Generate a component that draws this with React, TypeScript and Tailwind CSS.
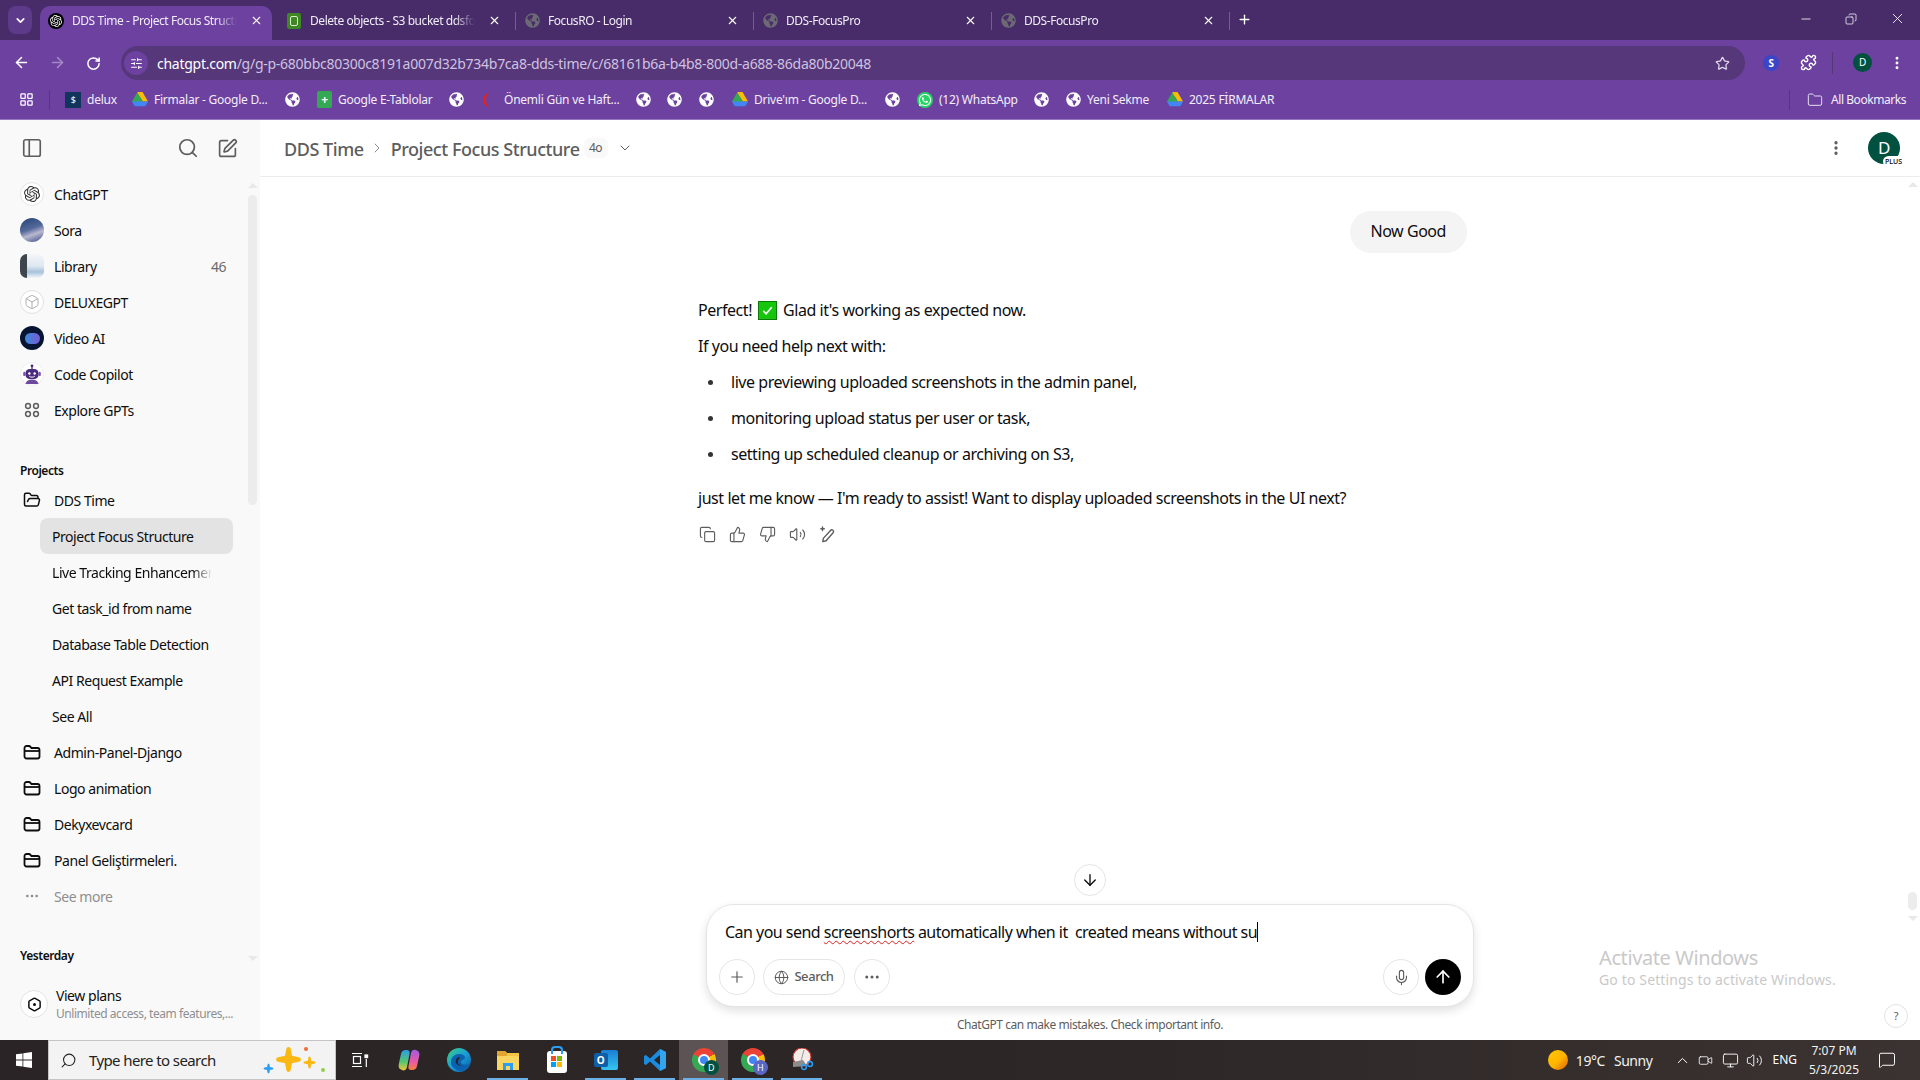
import React from "react";
import {
  ArrowLeft, ArrowRight, RotateCw, Star, Puzzle, EllipsisVertical, X, Plus, Minus, Search, SquarePen,
  PanelLeft, Folder, FolderOpen, ChevronRight, ChevronDown, Globe, Mic, ArrowUp, ArrowDown, Ellipsis,
  Copy, ThumbsUp, ThumbsDown, Volume2, Box, LayoutGrid, SlidersHorizontal, ChevronUp, Monitor, MessageSquare, Video, Hexagon, Sparkle,
} from "lucide-react";
import { FaGlobeAmericas, FaWhatsapp } from "react-icons/fa";
import { SiOpenai } from "react-icons/si";

function Drive() {
  return (
    <svg width="16" height="15" viewBox="0 0 24 22">
      <path d="M8 0h8l8 14h-8z" fill="#fbbc04" />
      <path d="M8 0l8 14-4 7-12-7z" fill="#34a853" />
      <path d="M0 14l4 7h16l4-7z" fill="#4285f4" />
      <path d="M8 0h8l-4 7z" fill="#fbbc04" />
    </svg>
  );
}

function FolderBand() {
  return (
    <svg width="18" height="18" viewBox="0 0 18 18" fill="none" stroke="#0d0d0d" strokeWidth="1.8" strokeLinejoin="round">
      <path d="M1.500 5a2 2 0 012-2h3l2 2h6a2 2 0 012 2v6.500a2 2 0 01-2 2h-11a2 2 0 01-2-2z" />
      <path d="M1.500 8h15" />
    </svg>
  );
}

function Tab({ title, active, icon, sep }: { title: string; active?: boolean; icon: React.ReactNode; sep?: boolean }) {
  return (
    <div className={`relative shrink-0 h-[34px] flex items-center pb-[5px] ${active ? "w-[232px] bg-[#6d41a0] rounded-t-[10px] pl-2 pr-[9px] mr-[6px]" : "w-[238px] pl-[8px] pr-[15px]"}`}>
      <span className="w-4 h-4 flex items-center justify-center shrink-0">{icon}</span>
      <span className="ml-2 flex-1 overflow-hidden whitespace-nowrap text-[12px] text-[#f1ecf7] [mask-image:linear-gradient(90deg,#000_85%,transparent_97%)]">{title}</span>
      <X size={13} strokeWidth={2} className="text-white ml-2 shrink-0" />
      {sep && <span className="absolute right-0 top-[6px] h-[18px] w-px bg-[#7a55a8]" />}
    </div>
  );
}

const globeTab = <FaGlobeAmericas size={15} className="text-[#6d6a75]" />;
const globeB = <FaGlobeAmericas size={15} className="text-white" />;

function BM({ w, icon, label }: { w: number; icon: React.ReactNode; label?: string }) {
  return (
    <div style={{ width: w }} className="shrink-0 flex items-center gap-[6px] overflow-hidden">
      <span className="shrink-0 flex items-center">{icon}</span>
      {label && <span className="text-[12px] tracking-[-0.02em] text-[#f3eef9] whitespace-nowrap">{label}</span>}
    </div>
  );
}

function Browser() {
  return (
    <div className="shrink-0">
      <div className="h-10 bg-[#472c69] flex items-end pl-2">
        <div className="w-6 h-7 mb-[6px] mr-2 rounded-[8px] bg-[#5e3a8a] flex items-center justify-center shrink-0">
          <ChevronDown size={13} strokeWidth={3} className="text-white" />
        </div>
        <Tab active title="DDS Time - Project Focus Structure" icon={<span className="w-4 h-4 rounded-full bg-black text-white flex items-center justify-center"><SiOpenai size={12} /></span>} />
        <Tab title="Delete objects - S3 bucket ddsfocus" sep icon={<span className="w-[14px] h-4 rounded-[2px] bg-[#3f8624] flex items-center justify-center"><span className="w-2 h-[10px] border border-[#d8f0c8] rounded-[2px]" /></span>} />
        <Tab title="FocusRO - Login" sep icon={globeTab} />
        <Tab title="DDS-FocusPro" sep icon={globeTab} />
        <Tab title="DDS-FocusPro" sep icon={globeTab} />
        <Plus size={15} strokeWidth={2.2} className="text-white ml-[7px] mb-[13px] shrink-0" />
        <div className="flex-1" />
        <div className="flex items-center mb-[13px] text-white">
          <Minus size={14} strokeWidth={1.4} className="mr-[32px]" />
          <Copy size={12} strokeWidth={1.5} className="mr-[32px] scale-x-[-1]" />
          <X size={17} strokeWidth={1.2} className="mr-[14px]" />
        </div>
      </div>
      <div className="h-10 bg-[#6d41a0] flex items-start pt-[6px] pl-[13px]">
        <ArrowLeft size={17} strokeWidth={2.2} className="text-white mt-2 mr-[19px]" />
        <ArrowRight size={17} strokeWidth={2.2} className="text-[#a48ac4] mt-2 mr-[20px]" />
        <RotateCw size={15} strokeWidth={2.4} className="text-white mt-[10px] mr-[20px]" />
        <div className="w-[1624px] h-[34px] rounded-full bg-[#56377a] flex items-center pl-[3px] shrink-0">
          <span className="w-[24px] h-[24px] rounded-full bg-[#6d41a0] flex items-center justify-center mr-[9px]">
            <SlidersHorizontal size={13} className="text-white" />
          </span>
          <span className="text-[14px] tracking-[-0.019em] text-white">chatgpt.com</span>
          <span className="text-[14px] tracking-[-0.019em] text-[#cfc2e0]">/g/g-p-680bbc80300c8191a007d32b734b7ca8-dds-time/c/68161b6a-b4b8-800d-a688-86da80b20048</span>
          <div className="flex-1" />
          <Star size={15} strokeWidth={2} className="text-[#e1d8ec] mr-[15px]" />
        </div>
        <span className="ml-[18px] mt-[9px] w-4 h-4 rounded-full bg-[#3b45c8] text-white text-[10px] font-bold flex items-center justify-center">S</span>
        <Puzzle size={17} strokeWidth={2} className="text-white ml-[21px] mt-2" />
        <span className="ml-[15px] mt-[6px] w-px h-[22px] bg-[#56377a]" />
        <span className="ml-[20px] mt-[7px] w-[19px] h-[19px] rounded-full bg-[#00513f] text-white text-[10px] flex items-center justify-center">D</span>
        <EllipsisVertical size={16} strokeWidth={2.4} className="text-white ml-[17px] mt-[9px]" />
      </div>
      <div className="h-10 bg-[#6d41a0] border-b border-[#9478bd] flex items-center pl-[19px]">
        <span className="w-[30px] shrink-0"><LayoutGrid size={15} className="text-white" /></span>
        <span className="w-px h-[20px] bg-[#56377a] mr-[15px] shrink-0" />
        <BM w={67} label="delux" icon={<span className="w-4 h-4 bg-[#12355b] flex items-center justify-center text-white text-[9px]">$</span>} />
        <BM w={153} label="Firmalar - Google D..." icon={<Drive />} />
        <BM w={32} icon={globeB} />
        <BM w={132} label="Google E-Tablolar" icon={<span className="w-[15px] h-[17px] rounded-[2px] bg-[#34a853] flex items-center justify-center text-white text-[12px] font-bold leading-none">+</span>} />
        <BM w={34} icon={globeB} />
        <BM w={153} label="Önemli Gün ve Haft..." icon={<span className="w-[14px] h-[14px] rounded-full border-l-[3px] border-[#e2231a] mr-[1px]" />} />
        <BM w={31} icon={globeB} />
        <BM w={32} icon={globeB} />
        <BM w={33} icon={globeB} />
        <BM w={153} label="Drive'ım - Google D..." icon={<Drive />} />
        <BM w={32} icon={globeB} />
        <BM w={117} label="(12) WhatsApp" icon={<span className="w-4 h-4 rounded-full bg-[#25d366] flex items-center justify-center"><FaWhatsapp size={14} className="text-white" /></span>} />
        <BM w={32} icon={globeB} />
        <BM w={101} label="Yeni Sekme" icon={globeB} />
        <BM w={120} label="2025 FİRMALAR" icon={<Drive />} />
        <div className="flex-1" />
        <span className="w-px h-[20px] bg-[#56377a] mr-[17px]" />
        <Folder size={16} strokeWidth={1.5} className="text-[#e5dcef] mr-[8px]" />
        <span className="text-[12px] text-[#f3eef9] mr-[14px]">All Bookmarks</span>
      </div>
    </div>
  );
}

function Row({ icon, label, muted, right }: { icon: React.ReactNode; label: string; muted?: boolean; right?: string }) {
  return (
    <div className="h-9 flex items-center pl-5 pr-[34px]">
      <span className="w-6 h-6 flex items-center justify-center shrink-0">{icon}</span>
      <span className={`ml-[10px] text-[14px] whitespace-nowrap ${muted ? "text-[#8f8f8f]" : "text-[#0d0d0d]"}`}>{label}</span>
      {right && <span className="ml-auto text-[14px] text-[#6b6b6b]">{right}</span>}
    </div>
  );
}

function SubRow({ label, active, fade }: { label: string; active?: boolean; fade?: boolean }) {
  return (
    <div className={`h-9 w-[193px] ml-10 flex items-center pl-3 rounded-lg overflow-hidden ${active ? "bg-[#e3e3e3]" : ""}`}>
      <span className={`text-[14px] text-[#0d0d0d] whitespace-nowrap overflow-hidden ${fade ? "w-[160px] [mask-image:linear-gradient(90deg,#000_88%,transparent)]" : ""}`}>{label}</span>
    </div>
  );
}

function Sidebar() {
  const folder = <FolderBand />;
  return (
    <aside className="relative w-[260px] shrink-0 bg-[#f9f9f9] flex flex-col">
      <div className="h-14 flex items-center pl-[21px]">
        <PanelLeft size={22} strokeWidth={1.8} className="text-[#5d5d5d]" />
        <Search size={22} strokeWidth={1.9} className="text-[#5d5d5d] ml-[134px]" />
        <SquarePen size={21} strokeWidth={1.9} className="text-[#5d5d5d] ml-[18px]" />
      </div>
      <Row label="ChatGPT" icon={<span className="w-6 h-6 rounded-full bg-white border border-[#e5e5e5] flex items-center justify-center text-[#333]"><SiOpenai size={16} /></span>} />
      <Row label="Sora" icon={<span className="w-6 h-6 rounded-full bg-[linear-gradient(160deg,#2e4a7d_10%,#54699a_45%,#b9b8d0_65%,#48578f_95%)]" />} />
      <Row label="Library" right="46" icon={
        <span className="w-6 h-6 rounded-[7px] overflow-hidden bg-[#f4f6f9] flex">
          <span className="w-[7px] bg-[#3d454d]" />
          <span className="flex-1 bg-[linear-gradient(180deg,#f4f6f9_0%,#dfe7f0_50%,#a8c1dc_75%,#f4f6f9_100%)]" />
        </span>} />
      <Row label="DELUXEGPT" icon={<span className="w-6 h-6 rounded-full bg-white border border-[#e0e0e0] flex items-center justify-center"><Box size={16} strokeWidth={1.4} className="text-[#a8a8a8]" /></span>} />
      <Row label="Video AI" icon={<span className="w-6 h-6 rounded-full bg-[#071533] flex items-center justify-center"><span className="w-[15px] h-[11px] rounded-[6px] bg-[linear-gradient(90deg,#3a8bd8,#7a5ad8)]" /></span>} />
      <Row label="Code Copilot" icon={
        <span className="w-6 h-6 rounded-full bg-white border border-[#eee] flex items-center justify-center">
          <svg width="22" height="22" viewBox="0 0 20 20">
            <circle cx="10" cy="2.600" r="1.300" fill="#4a2a7c" />
            <rect x="9.400" y="3" width="1.200" height="3" fill="#4a2a7c" />
            <rect x="4" y="5.500" width="12" height="9" rx="4" fill="#4a2a7c" />
            <rect x="2" y="8" width="2" height="4" rx="1" fill="#7a4fb0" />
            <rect x="16" y="8" width="2" height="4" rx="1" fill="#7a4fb0" />
            <circle cx="7.600" cy="9.500" r="1.100" fill="#fff" />
            <circle cx="12.400" cy="9.500" r="1.100" fill="#fff" />
            <path d="M7.500 12c1.500 1.200 3.500 1.200 5 0" stroke="#fff" strokeWidth=".9" fill="none" />
            <path d="M4 19c1-3 3-4 6-4s5 1 6 4z" fill="#6d4aa0" />
          </svg>
        </span>} />
      <Row label="Explore GPTs" icon={
        <svg width="16" height="16" viewBox="0 0 16 16" fill="none" stroke="#5d5d5d" strokeWidth="1.5">
          <circle cx="4" cy="4" r="2.400" /><circle cx="12" cy="4" r="2.400" /><circle cx="4" cy="12" r="2.400" /><circle cx="12" cy="12" r="2.400" />
        </svg>} />
      <div className="h-[23px] mt-[31px] pl-5 flex items-center text-[12px] font-semibold text-[#0d0d0d]">Projects</div>
      <Row label="DDS Time" icon={<FolderOpen size={18} strokeWidth={2} className="text-[#0d0d0d]" />} />
      <SubRow label="Project Focus Structure" active />
      <SubRow label="Live Tracking Enhancement" fade />
      <SubRow label="Get task_id from name" />
      <SubRow label="Database Table Detection" />
      <SubRow label="API Request Example" />
      <SubRow label="See All" />
      <Row label="Admin-Panel-Django" icon={folder} />
      <Row label="Logo animation" icon={folder} />
      <Row label="Dekyxevcard" icon={folder} />
      <Row label="Panel Geliştirmeleri." icon={folder} />
      <Row label="See more" muted icon={<Ellipsis size={16} className="text-[#8f8f8f]" />} />
      <div className="h-6 mt-[30px] pl-5 flex items-center text-[12px] font-semibold text-[#0d0d0d]">Yesterday</div>
      <div className="mt-[18px] flex items-center pl-5">
        <span className="relative w-7 h-7 rounded-full bg-white border border-[#e3e3e3] flex items-center justify-center shrink-0">
          <Hexagon size={15} strokeWidth={2.4} className="text-[#0d0d0d]" />
          <span className="absolute w-[3px] h-[3px] rounded-full bg-[#0d0d0d]" />
        </span>
        <div className="ml-2 flex flex-col">
          <span className="text-[14px] leading-[20px] text-[#0d0d0d]">View plans</span>
          <span className="text-[12px] leading-[16px] text-[#8f8f8f] whitespace-nowrap">Unlimited access, team features,...</span>
        </div>
      </div>
      <span className="absolute left-[248px] top-[75px] w-[9px] h-[310px] rounded-full bg-[#ececec]" />
      <span className="absolute left-[248px] top-[63px] w-0 h-0 border-x-[5px] border-x-transparent border-b-[5px] border-b-[#e8e8e8]" />
      <span className="absolute left-[248px] top-[836px] w-0 h-0 border-x-[5px] border-x-transparent border-t-[5px] border-t-[#e8e8e8]" />
    </aside>
  );
}

function Line({ children, className = "" }: { children: React.ReactNode; className?: string }) {
  return <div className={`h-9 flex items-center text-[16px] text-[#0d0d0d] whitespace-nowrap ${className}`}>{children}</div>;
}

function Bullet({ children }: { children: React.ReactNode }) {
  return (
    <Line>
      <span className="w-[5px] h-[5px] rounded-full bg-[#333] ml-[10px] mr-[18px]" />
      {children}
    </Line>
  );
}

function RoundBtn({ children, className = "" }: { children: React.ReactNode; className?: string }) {
  return <div className={`h-9 rounded-full border border-[#e5e5e5] bg-white flex items-center justify-center shrink-0 ${className}`}>{children}</div>;
}

function Main() {
  return (
    <main className="relative flex-1 bg-white flex flex-col min-w-0">
      <header className="h-[57px] shrink-0 border-b border-[#ececec] flex items-center pl-[24px] pr-5">
        <span className="text-[18px] font-medium text-[#5d5d5d] whitespace-nowrap pt-[2px]">DDS Time</span>
        <ChevronRight size={16} strokeWidth={1.5} className="text-[#8f8f8f] ml-[5px] mr-[6px]" />
        <span className="text-[18px] font-medium text-[#5d5d5d] whitespace-nowrap pt-[2px]">Project Focus Structure</span>
        <span className="ml-[4px] h-[20px] w-[24px] rounded-[6px] bg-[#f9f9f9] text-[12px] text-[#5d5d5d] flex items-center justify-center">4o</span>
        <ChevronDown size={16} strokeWidth={1.5} className="text-[#5d5d5d] ml-[9px]" />
        <div className="flex-1" />
        <EllipsisVertical size={18} strokeWidth={2.4} className="text-[#5d5d5d] mr-[23px]" />
        <span className="relative w-8 h-8 rounded-full bg-[#00513f] text-white text-[17px] flex items-center justify-center">
          D
          <span className="absolute -right-[4px] -bottom-[3px] px-[2px] h-[11px] rounded-full bg-white text-black text-[7px] leading-[11px] font-medium tracking-normal">PLUS</span>
        </span>
      </header>
      <div className="flex-1 min-h-0 ml-[438px] w-[769px] flex flex-col">
        <div className="self-end mt-[34px] h-[42px] rounded-full bg-[#f4f4f4] pl-[20px] pr-[21px] pb-[2px] flex items-center text-[16px] text-[#0d0d0d]">Now Good</div>
        <div className="mt-[39px]">
          <Line>
            Perfect!
            <span className="mx-[6px] w-[19px] h-[19px] bg-[#16c60c] border border-[#0d7a08] flex items-center justify-center">
              <svg width="13" height="13" viewBox="0 0 14 14" fill="none" stroke="#fff" strokeWidth="1.8"><path d="M2.500 7.500l3 3 6-7" /></svg>
            </span>
            Glad it's working as expected now.
          </Line>
          <Line>If you need help next with:</Line>
          <Bullet>live previewing uploaded screenshots in the admin panel,</Bullet>
          <Bullet>monitoring upload status per user or task,</Bullet>
          <Bullet>setting up scheduled cleanup or archiving on S3,</Bullet>
          <Line className="mt-2">just let me know — I'm ready to assist! Want to display uploaded screenshots in the UI next?</Line>
          <div className="h-9 flex items-center pl-[1px] gap-[13px] text-[#5d5d5d]">
            <Copy size={17} strokeWidth={1.6} />
            <ThumbsUp size={17} strokeWidth={1.6} />
            <ThumbsDown size={17} strokeWidth={1.6} />
            <Volume2 size={17} strokeWidth={1.6} />
            <svg width="17" height="17" viewBox="0 0 17 17" fill="none" stroke="currentColor" strokeWidth="1.400" strokeLinejoin="round" strokeLinecap="round">
              <path d="M11.500 4.500a1.700 1.700 0 012.600 2.300l-7 8-3.300.8.500-3.200z" />
              <path d="M3.500 1v3.500M1.800 2.800h3.500" />
            </svg>
          </div>
        </div>
      </div>
      <div className="shrink-0 flex flex-col items-center">
        <div className="w-8 h-8 rounded-full border border-[#e5e5e5] bg-white flex items-center justify-center mb-2">
          <ArrowDown size={18} strokeWidth={1.8} className="text-[#0d0d0d]" />
        </div>
        <div className="w-[768px] h-[103px] rounded-[28px] border border-[#e5e5e5] bg-white shadow-[0_4px_10px_rgba(0,0,0,0.12)] flex flex-col">
          <div className="h-[54px] pl-[18px] flex items-center text-[16px] tracking-[-0.033em] text-[#0d0d0d] whitespace-pre">
            Can you send <span className="underline decoration-wavy decoration-[#e02020] decoration-1 underline-offset-2">screenshorts</span> automatically when it  created means without su
            <span className="inline-block w-px h-5 bg-black" />
          </div>
          <div className="flex items-center pl-3 pr-[12px]">
            <RoundBtn className="w-9"><Plus size={18} strokeWidth={1.6} className="text-[#5d5d5d]" /></RoundBtn>
            <RoundBtn className="w-[82px] ml-2 gap-[5px]">
              <Globe size={15} strokeWidth={1.6} className="text-[#5d5d5d]" />
              <span className="text-[13px] font-medium text-[#5d5d5d]">Search</span>
            </RoundBtn>
            <RoundBtn className="w-9 ml-[9px]"><Ellipsis size={18} strokeWidth={2} className="text-[#5d5d5d]" /></RoundBtn>
            <div className="flex-1" />
            <RoundBtn className="w-9 mr-[1px]"><Mic size={17} strokeWidth={1.6} className="text-[#5d5d5d]" /></RoundBtn>
            <div className="w-9 h-9 ml-[5px] rounded-full bg-black flex items-center justify-center">
              <ArrowUp size={20} strokeWidth={2} className="text-white" />
            </div>
          </div>
        </div>
        <div className="h-[33px] pt-[3px] flex items-center text-[12px] text-[#5d5d5d]">ChatGPT can make mistakes. Check important info.</div>
      </div>
      <div className="absolute left-[1339px] top-[826px] text-[#c9c9c9] pointer-events-none">
        <div className="text-[20px] leading-[24px] tracking-[-0.02em] whitespace-nowrap">Activate Windows</div>
        <div className="text-[14px] leading-[20px] tracking-[0.01em] whitespace-nowrap">Go to Settings to activate Windows.</div>
      </div>
      <div className="absolute left-[1624px] top-[884px] w-6 h-6 rounded-full border border-[#e3e3e3] bg-white flex items-center justify-center text-[11px] text-[#5d5d5d]">?</div>
      <span className="absolute left-[1648px] top-[772px] w-[9px] h-[18px] rounded-full bg-[#ececec]" />
      <span className="absolute left-[1648px] top-[796px] w-0 h-0 border-x-[5px] border-x-transparent border-t-[5px] border-t-[#e8e8e8]" />
      <span className="absolute left-[1648px] top-[62px] w-0 h-0 border-x-[5px] border-x-transparent border-b-[5px] border-b-[#e8e8e8]" />
    </main>
  );
}

function Chrome({ letter, badge }: { letter: string; badge: string }) {
  return (
    <span className="relative w-[24px] h-[24px] rounded-full bg-[conic-gradient(from_-60deg,#ea4335_0deg_120deg,#fbbc04_120deg_210deg,#34a853_210deg_360deg)] flex items-center justify-center">
      <span className="w-[12px] h-[12px] rounded-full bg-[#4285f4] border-2 border-white" />
      <span className={`absolute -right-[3px] -bottom-[3px] w-[15px] h-[15px] rounded-full text-white text-[9px] flex items-center justify-center ${badge}`}>{letter}</span>
    </span>
  );
}

function TaskIcon({ children, w = 49, running, active }: { children: React.ReactNode; w?: number; running?: boolean; active?: boolean }) {
  return (
    <div style={{ width: w }} className={`relative h-10 flex items-center justify-center shrink-0 ${active ? "bg-[#5c5454]" : ""}`}>
      {children}
      {running && <span className="absolute left-[4px] right-[4px] bottom-0 h-[2px] bg-[#6cb0e8]" />}
    </div>
  );
}

function Taskbar() {
  return (
    <div className="h-10 shrink-0 bg-[linear-gradient(90deg,#2a2426,#2d2727_60%,#3a3331)] flex items-center text-white">
      <div className="w-12 h-10 flex items-center justify-center shrink-0">
        <svg width="16" height="16" viewBox="0 0 16 16" fill="#fff"><path d="M0 2.300l6.500-.9v6.200H0zM7.300 1.300L16 0v7.600H7.300zM0 8.400h6.500v6.200L0 13.700zM7.300 8.400H16V16l-8.700-1.200z" /></svg>
      </div>
      <div className="w-[288px] h-10 bg-[#f3f3f3] border border-[#c4c4c4] flex items-center shrink-0 pl-[11px]">
        <Search size={17} strokeWidth={1.5} className="text-[#222] scale-x-[-1]" />
        <span className="ml-[12px] text-[15px] tracking-[-0.04em] text-[#222] whitespace-nowrap">Type here to search</span>
        <span className="relative ml-auto mr-[10px] w-[62px] h-[34px]">
          <Sparkle size={27} fill="#fbb812" stroke="#fbb812" className="absolute left-[12px] top-[3px]" />
          <Sparkle size={13} fill="#fbb812" stroke="#fbb812" className="absolute left-[40px] top-[13px]" />
          <Sparkle size={11} fill="#2a9df4" stroke="#2a9df4" className="absolute left-0 top-[20px]" />
          <span className="absolute left-[41px] top-[4px] w-[4px] h-[4px] rounded-full bg-[#ef6c35]" />
          <span className="absolute left-[58px] top-[25px] w-[4px] h-[4px] rounded-full bg-[#8fcf4c]" />
        </span>
      </div>
      <div className="flex items-center ml-0">
        <TaskIcon w={48}>
          <svg width="18" height="16" viewBox="0 0 18 16" fill="none" stroke="#fff" strokeWidth="1.200"><path d="M1 1.500h10M1 14.500h10" /><rect x="2.500" y="4.500" width="7" height="7" /><rect x="14" y="3" width="2.600" height="2.600" fill="#fff" /><path d="M15.300 7v8" /></svg>
        </TaskIcon>
        <TaskIcon w={50}>
          <svg width="24" height="24" viewBox="0 0 24 24">
            <defs>
              <linearGradient id="cp1" x1="0" y1="0" x2="0" y2="1"><stop offset="0" stopColor="#2f9be8" /><stop offset=".6" stopColor="#58c86a" /><stop offset="1" stopColor="#f5c33b" /></linearGradient>
              <linearGradient id="cp2" x1="0" y1="0" x2="0" y2="1"><stop offset="0" stopColor="#a05be0" /><stop offset=".6" stopColor="#ea5aa5" /><stop offset="1" stopColor="#f5823c" /></linearGradient>
            </defs>
            <path d="M9 2c3 0 4 1 3.500 4L10 19c-.5 3-3 4-5 3-3-1-4-3-3-7l2-9c.5-2.500 2-4 5-4z" fill="url(#cp1)" />
            <path d="M15 22c-3 0-4-1-3.500-4L14 5c.5-3 3-4 5-3 3 1 4 3 3 7l-2 9c-.5 2.500-2 4-5 4z" fill="url(#cp2)" />
          </svg>
        </TaskIcon>
        <TaskIcon w={49}>
          <svg width="24" height="24" viewBox="0 0 24 24">
            <defs><linearGradient id="ed" x1="0" y1="0" x2="1" y2="1"><stop offset="0" stopColor="#3fd07e" /><stop offset=".5" stopColor="#1a9ed8" /><stop offset="1" stopColor="#0c59a4" /></linearGradient></defs>
            <circle cx="12" cy="12" r="12" fill="url(#ed)" />
            <path d="M23 15c-2 2-8 3-9-1 0-2 4-2 4-5-1-3-6-4-10-2C4 9 3 14 5 18c2 3 6 5 9 5 4 0 8-3 9-8z" fill="#0b62b0" />
            <path d="M13 9c-3 0-5 3-4 6 1 2 4 3 6 3-3-1-5-3-4-5 .5-2 2-3 2-4z" fill="#2a2426" />
          </svg>
        </TaskIcon>
        <TaskIcon w={49} running>
          <svg width="24" height="22" viewBox="0 0 24 22">
            <path d="M1 2h8l2 2h12v17H1z" fill="#f6c343" /><path d="M1 2h8l2 2v3H1z" fill="#e2a52d" />
            <path d="M1 7h22v14H1z" fill="#fbd561" /><path d="M7 21v-7h10v7h-3v-4h-4v4z" fill="#2a9df4" />
          </svg>
        </TaskIcon>
        <TaskIcon w={49}>
          <span className="relative w-[20px] h-[22px] rounded-[3px] bg-white flex items-center justify-center mt-[3px]">
            <span className="absolute -top-[5px] left-[4px] w-3 h-2 border-2 border-b-0 border-[#2a9df4] rounded-t-[4px]" />
            <span className="grid grid-cols-2 gap-px w-[11px] h-[11px]">
              <span className="bg-[#f25022]" /><span className="bg-[#7fba00]" /><span className="bg-[#00a4ef]" /><span className="bg-[#ffb900]" />
            </span>
          </span>
        </TaskIcon>
        <TaskIcon w={49} running>
          <span className="relative w-6 h-6">
            <span className="absolute right-0 top-[2px] w-[17px] h-[20px] rounded-[2px] bg-[linear-gradient(180deg,#1a7ed4,#35c6f0)]" />
            <span className="absolute left-0 top-[5px] w-[14px] h-[14px] rounded-[2px] bg-[#0f5ea8] text-white text-[10px] font-bold flex items-center justify-center">O</span>
          </span>
        </TaskIcon>
        <TaskIcon w={49} running>
          <svg width="24" height="24" viewBox="0 0 24 24"><path d="M17 1l6 3v16l-6 3L7 13.500 3 17l-2-1V8l2-1 4 3.500z" fill="#1c8bdd" /><path d="M17 7l-6 5 6 5z" fill="#2a2426" /><path d="M17 1l6 3v16l-6 3z" fill="#32a5ee" /></svg>
        </TaskIcon>
        <TaskIcon w={49} running active><Chrome letter="D" badge="bg-[#00513f]" /></TaskIcon>
        <TaskIcon w={49} running><Chrome letter="H" badge="bg-[#5a66c4]" /></TaskIcon>
        <TaskIcon w={49} running>
          <svg width="24" height="24" viewBox="0 0 24 24">
            <circle cx="12" cy="9" r="9" fill="#f3ece8" stroke="#c9342c" strokeWidth="1.200" />
            <path d="M3 14l10-2 4 6-14 1z" fill="#8c8c8c" />
            <path d="M14 2l-3 11" stroke="#9a9a9a" strokeWidth="1" />
            <circle cx="14" cy="19" r="2.400" fill="none" stroke="#2a9df4" strokeWidth="1.500" />
            <circle cx="20" cy="16" r="2.400" fill="none" stroke="#2a9df4" strokeWidth="1.500" />
          </svg>
        </TaskIcon>
      </div>
      <div className="flex-1" />
      <div className="flex items-center">
        <span className="w-5 h-5 rounded-full bg-[linear-gradient(135deg,#ffc900,#ffb300_55%,#d95c0a)]" />
        <span className="ml-[8px] text-[14px] text-[#f2f2f2] whitespace-nowrap">19°C</span>
        <span className="ml-[9px] text-[14px] text-[#f2f2f2] whitespace-nowrap">Sunny</span>
        <ChevronUp size={17} strokeWidth={1.4} className="ml-[22px]" />
        <Video size={15} strokeWidth={1.3} className="ml-[7px]" />
        <Monitor size={17} strokeWidth={1.3} className="ml-[9px]" />
        <Volume2 size={17} strokeWidth={1.3} className="ml-[7px]" />
        <span className="ml-[9px] text-[12px] tracking-normal">ENG</span>
        <div className="ml-[12px] w-[50px] flex flex-col items-center text-[12px] leading-[19px] tracking-normal text-[#f2f2f2] whitespace-nowrap">
          <span>7:07 PM</span><span>5/3/2025</span>
        </div>
        <MessageSquare size={18} strokeWidth={1.3} className="ml-[19px] mr-[24px]" />
      </div>
    </div>
  );
}

export default function App() {
  return (
    <div className="w-[1920px] h-[1080px] overflow-hidden flex flex-col font-['Noto_Sans',sans-serif] tracking-[-0.028em]">
      <Browser />
      <div className="flex-1 min-h-0 flex">
        <Sidebar />
        <Main />
      </div>
      <Taskbar />
    </div>
  );
}
